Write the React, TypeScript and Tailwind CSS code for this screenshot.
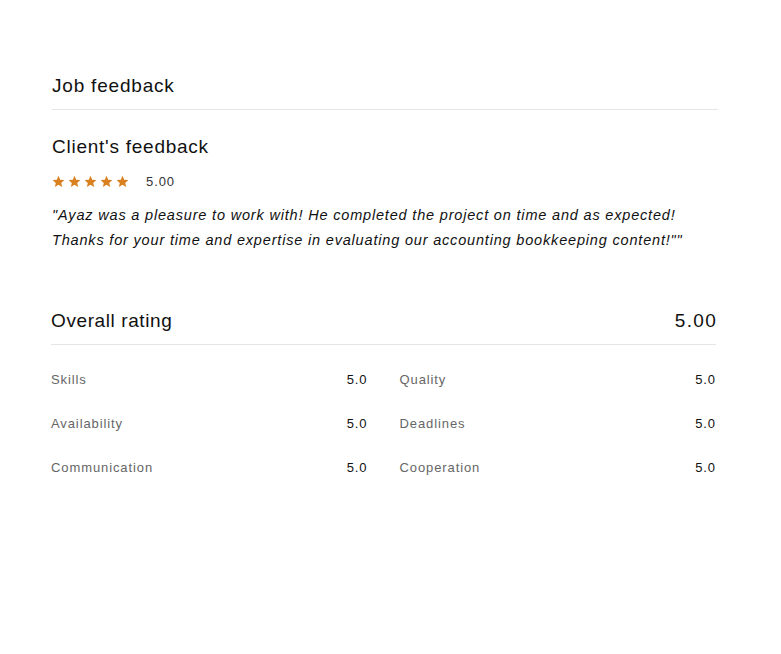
const RATINGS = [
  ["Skills", "5.0", "Quality", "5.0"],
  ["Availability", "5.0", "Deadlines", "5.0"],
  ["Communication", "5.0", "Cooperation", "5.0"],
];

function Star() {
  return (
    <svg width="13" height="13" viewBox="0 0 24 24" fill="#d9801f">
      <path d="M12 1.5l3.1 7.2 7.8.7-5.9 5.2 1.8 7.7L12 18.2l-6.8 4.1 1.8-7.7-5.9-5.2 7.8-.7z" />
    </svg>
  );
}

export default function App() {
  return (
    <div
      className="min-h-screen bg-white text-[#111]"
      style={{ fontFamily: '"Liberation Sans", Arial, sans-serif' }}
    >
      <div className="pl-[52px] pr-[63px] pt-[74px]">
        {/* Job feedback */}
        <h2 className="text-[19px] leading-6 tracking-[0.8px] pb-[11px] border-b border-[#e5e5e5]">
          Job feedback
        </h2>

        <h3 className="text-[19px] leading-6 tracking-[0.75px] mt-[25px]">Client's feedback</h3>
        <div className="flex items-center mt-[13px]">
          <div className="flex gap-[3px]">
            <Star />
            <Star />
            <Star />
            <Star />
            <Star />
          </div>
          <span className="ml-[17px] text-[13px] tracking-[0.9px] text-[#333]">5.00</span>
        </div>
        <p className="italic text-[14.5px] leading-[25px] tracking-[0.82px] mt-[11px] text-[#111]">
          "Ayaz was a pleasure to work with! He completed the project on time and as expected!
          <br />
          Thanks for your time and expertise in evaluating our accounting bookkeeping content!""
        </p>
      </div>

      {/* Overall rating */}
      <div className="pl-[51px] pr-[65px] mt-[56px]">
        <div className="flex justify-between items-center text-[19px] leading-6 tracking-[0.6px] pb-[11px] border-b border-[#e5e5e5]">
          <span>Overall rating</span>
          <span className="tracking-[1.3px] -mr-[1px]">5.00</span>
        </div>
        <div className="mt-[26px] flex flex-col gap-[27px]">
          {RATINGS.map((r) => (
            <div key={r[0]} className="grid grid-cols-2 gap-8 text-[13px] leading-[17px] tracking-[0.9px]">
              <div className="flex justify-between">
                <span className="text-[#666]">{r[0]}</span>
                <span className="text-[#111]">{r[1]}</span>
              </div>
              <div className="flex justify-between">
                <span className="text-[#666]">{r[2]}</span>
                <span className="text-[#111]">{r[3]}</span>
              </div>
            </div>
          ))}
        </div>
      </div>
    </div>
  );
}
